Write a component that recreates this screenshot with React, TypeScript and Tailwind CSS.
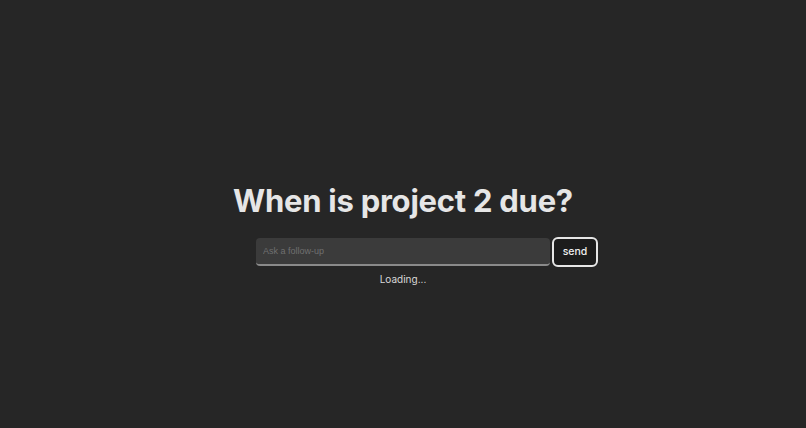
export default function App() {
  return (
    <div
      className="min-h-screen w-full bg-[#262626] flex flex-col items-center pt-[180px] text-[#e8e8e8]"
      style={{ fontFamily: "Inter, 'Liberation Sans', sans-serif" }}
    >
      <h1 className="text-[31px] leading-[41px] font-bold text-[#e6e6e6] tracking-[-0.25px]">
        When is project 2 due?
      </h1>
      <div className="flex items-center gap-[2px] mt-[16px] ml-[48px]">
        <input
          className="w-[294px] h-[28px] rounded-[4px] bg-[#3b3b3b] border-b-2 border-[#8a8a8a] px-[7px] text-[9px] text-[#ddd] placeholder:text-[#707070] outline-none"
          style={{ fontFamily: "'Liberation Sans', Arial, sans-serif" }}
          placeholder="Ask a follow-up"
        />
        <button className="w-[46px] h-[30px] rounded-[6px] border-2 border-[#e6e6e6] bg-[#1c1c1c] text-[10.5px] font-medium text-[#eee]">
          send
        </button>
      </div>
      <div className="mt-[5px] text-[10px] text-[#d8d8d8]">Loading...</div>
    </div>
  );
}
